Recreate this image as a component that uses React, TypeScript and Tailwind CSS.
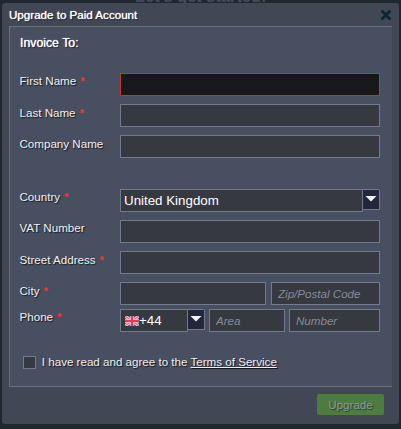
import type { ReactNode } from 'react';

const fieldBase = 'h-[23px] border border-[#737a8e] bg-[#363940] outline-none';
const hint =
  'px-1.5 text-[11.6px] italic text-white placeholder:text-[#858c9a] placeholder:opacity-100 [text-shadow:none]';

function Row({ label, required, className = '', labelClass = 'pt-px', children }: {
  label: string;
  required?: boolean;
  className?: string;
  labelClass?: string;
  children: ReactNode;
}) {
  return (
    <div className={`flex h-[23px] ${className}`}>
      <label className={`-ml-[0.5px] w-[100.5px] shrink-0 whitespace-nowrap text-[11.6px] leading-4 ${labelClass}`}>
        {label}
        {required && <span className="ml-1 font-bold text-[#f03a28] [text-shadow:none]">*</span>}
      </label>
      <div className="flex w-[260px]">{children}</div>
    </div>
  );
}

function Arrow() {
  return (
    <button type="button" className="flex h-[21px] w-[18px] shrink-0 -ml-px items-start justify-center rounded-tr-[2px] border border-[#737a8e] bg-[#23273a] pt-1.5">
      <svg width="12" height="6" viewBox="0 0 12 6">
        <path d="M.5 0h11L6 5.5z" fill="#f3f3f3" />
      </svg>
    </button>
  );
}

function Flag() {
  return (
    <svg width="14" height="10" viewBox="0 0 14 10" className="mt-px shrink-0">
      <rect width="14" height="10" fill="#4558ae" />
      <path d="M0 0l14 10M14 0L0 10" stroke="#ecd3e2" strokeWidth="3" />
      <path d="M0 0l14 10M14 0L0 10" stroke="#e4687c" strokeWidth="1.2" />
      <path d="M7 0v10M0 5h14" stroke="#f4c6d0" strokeWidth="3.4" />
      <path d="M7 0v10M0 5h14" stroke="#e8384a" strokeWidth="2" />
    </svg>
  );
}

export default function App() {
  return (
    <div className="relative h-[429px] w-[401px] overflow-hidden bg-[#20272f] pl-0.5 pt-[3px] font-['Liberation_Sans',Arial,sans-serif] text-[11.6px] text-[#f0f0f0] [text-shadow:1px_1px_1px_#14181f]">
      <div className="absolute left-[135px] top-[-14px] whitespace-nowrap text-[16.4px] font-bold leading-5 text-[#444d60] [text-shadow:none]">
        Let’s get started!
      </div>
      <section className="relative flex h-[421px] w-[397px] flex-col rounded-[3px] bg-[#414754] px-[7px]">
        <header className="flex h-[23px] items-start justify-between">
          <h1 className="pt-1 leading-4 text-white [text-shadow:0_0_1px_#fff,1px_1px_1px_#14181f]">Upgrade to Paid Account</h1>
          <button type="button" aria-label="Close" className="mr-px mt-[7px]">
            <svg width="10" height="10" viewBox="0 0 10 10">
              <path d="M1.5 1.5l7 7M8.5 1.5l-7 7" stroke="#0c2438" strokeWidth="2.8" strokeLinecap="square" />
            </svg>
          </button>
        </header>

        <form className="flex h-[361px] flex-col border-y border-l border-[#686f7d] bg-[#484f60] pl-2.5">
          <h2 className="mt-2 h-[38px] text-[12.3px] leading-4 text-white [text-shadow:0_0_1px_#fff,1px_1px_1px_#14181f]">Invoice To:</h2>
          <Row label="First Name" required labelClass="pt-0">
            <input aria-label="First Name" className="h-[23px] w-full border border-[#c43627] bg-[#17181b] outline-none" />
          </Row>
          <Row label="Last Name" required className="mt-2">
            <input aria-label="Last Name" className={`${fieldBase} w-full`} />
          </Row>
          <Row label="Company Name" className="mt-2">
            <input aria-label="Company Name" className={`${fieldBase} w-full`} />
          </Row>
          <Row label="Country" required className="mt-[31px]" labelClass="pt-0">
            <div className={`${fieldBase} flex w-[243px] items-center pl-[3px] text-[13.33px] text-white [text-shadow:none]`}>United Kingdom</div>
            <Arrow />
          </Row>
          <Row label="VAT Number" className="mt-2" labelClass="pt-0">
            <input aria-label="VAT Number" className={`${fieldBase} w-full`} />
          </Row>
          <Row label="Street Address" required className="mt-2">
            <input aria-label="Street Address" className={`${fieldBase} w-full`} />
          </Row>
          <Row label="City" required className="mt-2">
            <input aria-label="City" className={`${fieldBase} mr-[5px] w-[146px]`} />
            <input placeholder="Zip/Postal Code" className={`${fieldBase} ${hint} w-[109px]`} />
          </Row>
          <Row label="Phone" required className="mt-1" labelClass="pt-0">
            <div className={`${fieldBase} flex w-[68px] items-center pl-1 text-[13.33px] text-white [text-shadow:none]`}>
              <Flag />
              +44
            </div>
            <Arrow />
            <input placeholder="Area" className={`${fieldBase} ${hint} ml-1 w-[76px]`} />
            <input placeholder="Number" className={`${fieldBase} ${hint} ml-1 w-[91px]`} />
          </Row>
          <div className="ml-[3px] mt-[22px] flex items-center whitespace-nowrap">
            <span role="checkbox" aria-checked="false" className="mr-1.5 mt-px size-[13px] border border-[#737a8e] bg-[#363940]" />
            <span className="-ml-[0.2px] leading-4">
              I have read and agree to the <a className="underline">Terms of Service</a>
            </span>
          </div>
        </form>

        <footer className="flex justify-end pr-2 pt-[7px]">
          <button type="button" className="h-[21px] w-[67px] rounded-[2px] bg-[#4c7c3e] leading-[21px] text-[#8e9897] [text-shadow:1px_1px_1px_#2b3c2d]">
            Upgrade
          </button>
        </footer>
      </section>
    </div>
  );
}
